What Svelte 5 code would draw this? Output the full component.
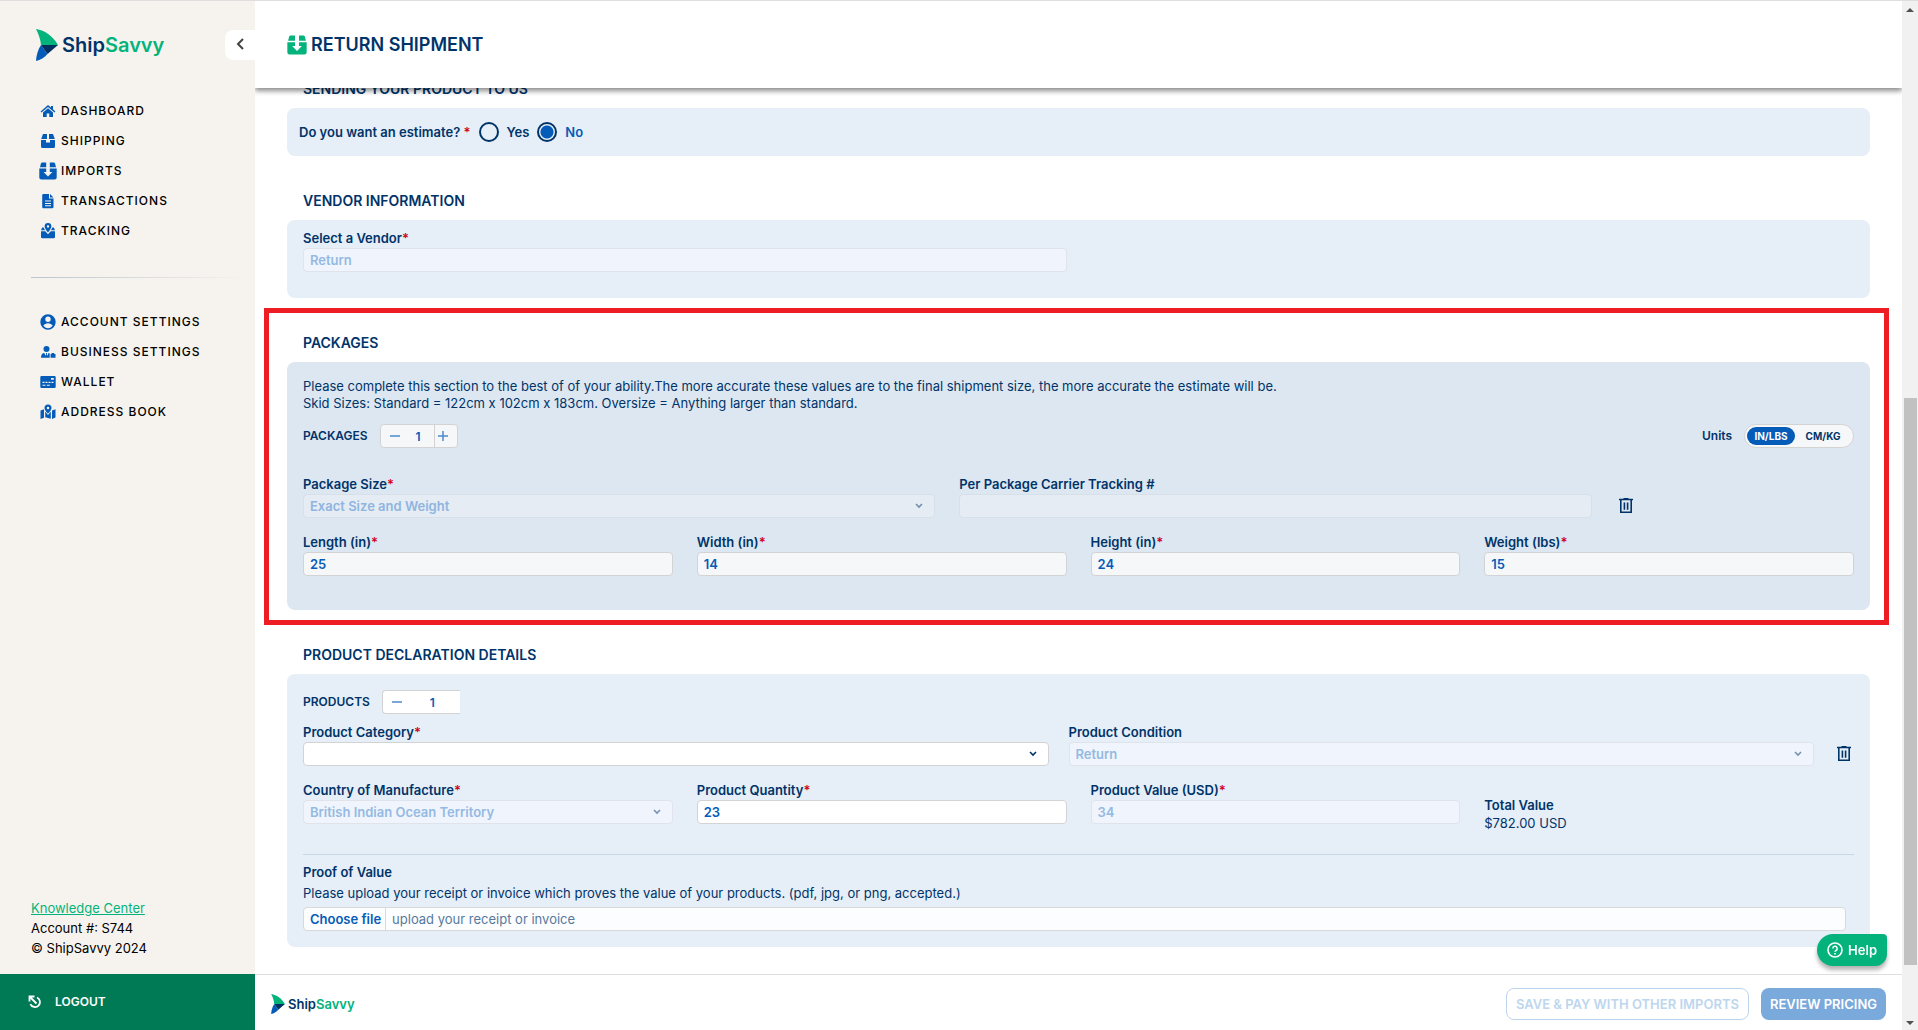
<script lang="ts">
	interface NavItem {
		label: string;
		icon: string;
	}

	const mainNav: NavItem[] = [
		{ label: 'Dashboard', icon: 'home' },
		{ label: 'Shipping', icon: 'box' },
		{ label: 'Imports', icon: 'import' },
		{ label: 'Transactions', icon: 'file' },
		{ label: 'Tracking', icon: 'tracking' }
	];

	const settingsNav: NavItem[] = [
		{ label: 'Account Settings', icon: 'account' },
		{ label: 'Business Settings', icon: 'business' },
		{ label: 'Wallet', icon: 'wallet' },
		{ label: 'Address Book', icon: 'map' }
	];

	let estimate = $state('no');
	let units = $state('in');
	let packageCount = $state(1);
	let productCount = $state(1);
	let quantity = $state(23);
	let value = $state(34);
	let total = $derived((quantity * value).toFixed(2));

	let dimensions = $state([
		{ id: 'length', label: 'Length', value: '25' },
		{ id: 'width', label: 'Width', value: '14' },
		{ id: 'height', label: 'Height', value: '24' },
		{ id: 'weight', label: 'Weight', value: '15' }
	]);

	function unitFor(id: string) {
		if (id === 'weight') return units === 'in' ? 'lbs' : 'kg';
		return units === 'in' ? 'in' : 'cm';
	}
</script>

{#snippet icon(name: string)}
	<svg class="icon" viewBox="0 0 18 18" fill="currentColor" aria-hidden="true">
		{#if name === 'home'}
			<path d="M9 3 1.6 9.4l.9 1L9 4.9l6.500 5.500.9-1-2.400-2.100V4h-2v1.600z" />
			<path d="M9 6.200 4 10.400V15h3.700v-3.600h2.600V15H14v-4.600z" />
		{:else if name === 'box'}
			<path d="M4 2h4v5H2.200zM10 2h4l1.800 5H10z" />
			<path d="M2 8h5v2.500h4V8h5v6.500a1.500 1.500 0 0 1-1.500 1.500h-11A1.500 1.500 0 0 1 2 14.500z" />
		{:else if name === 'import'}
			<path d="M3 .5h4.200v4.700H1L2 1.200zM10.800.5H15l1 .7 1 4h-6.200z" />
			<path
				fill-rule="evenodd"
				d="M.3 6.600h6.900V10H4.600L9 14.500l4.400-4.500h-2.600V6.600h6.900v8.900a2 2 0 0 1-2 2H2.300a2 2 0 0 1-2-2z"
			/>
		{:else if name === 'file'}
			<path
				fill-rule="evenodd"
				d="M4.500 2H10v4.500h4.500V15a1.300 1.300 0 0 1-1.300 1.300H4.500A1.300 1.300 0 0 1 3.200 15V3.300A1.300 1.300 0 0 1 4.500 2zM6 8.500v1h6v-1zm0 2.400v1h6v-1zm0 2.400v1h6v-1z"
			/>
			<path d="M11 2v3.500h3.500z" />
		{:else if name === 'tracking'}
			<path
				fill-rule="evenodd"
				d="M9 1a3.400 3.400 0 0 1 3.400 3.400C12.400 6.500 9 10.400 9 10.400S5.600 6.500 5.600 4.400A3.400 3.400 0 0 1 9 1zm0 2.200a1.200 1.200 0 1 0 0 2.400 1.200 1.200 0 0 0 0-2.400z"
			/>
			<path d="M3.200 5.500h1.400L6 8.200H2zM13.400 5.500h1.400L16 8.200h-4z" />
			<path d="M2 9.300h4.300L9 12.200l2.700-2.900H16V15a1.300 1.300 0 0 1-1.300 1.300H3.300A1.300 1.300 0 0 1 2 15z" />
		{:else if name === 'account'}
			<path
				fill-rule="evenodd"
				d="M9 1.300a7.700 7.700 0 1 1 0 15.400A7.700 7.700 0 0 1 9 1.300zm0 2.200a2.700 2.700 0 1 0 0 5.400 2.700 2.700 0 0 0 0-5.400zM4.300 12.600C5.300 14.200 7 15.200 9 15.200s3.700-1 4.700-2.600C12.700 11.100 11 10.200 9 10.200s-3.700.9-4.700 2.400z"
			/>
		{:else if name === 'business'}
			<path d="M7.500 3a3 3 0 1 1 0 6 3 3 0 0 1 0-6z" />
			<path d="M2 14.800c0-3 1.300-4.800 3.400-4.800l1 2.800.8-1.600L6.900 10h1.300l-.4 1.200.8 1.600.8-2.800 1.300.4v4.400z" />
			<path d="M11.600 11h1v-1h2.600v1h1.300v3.800h-4.900z" />
		{:else if name === 'wallet'}
			<path
				fill-rule="evenodd"
				d="M2.500 3h13a1.200 1.200 0 0 1 1.200 1.200v9.600a1.200 1.200 0 0 1-1.200 1.200h-13a1.200 1.200 0 0 1-1.200-1.200V4.200A1.200 1.200 0 0 1 2.500 3zM12 5v1.800h2.800V5zM3.500 8.800v1.200h2V8.800zm3 0v1.200h2V8.800zm3 0v1.200h2V8.800zm3 0v1.200h2V8.800zm-9 3v1h3v-1zm4.300 0v1h3v-1z"
			/>
		{:else if name === 'map'}
			<path d="M1.500 7.500 5 6.200v8.600l-3.500 1.300zM6.200 8.500 9 12l2.800-3.500v7.200l-5.600-1.500zM13 7.500l3.500-1.300v8.400L13 16z" />
			<path
				fill-rule="evenodd"
				d="M9 1.500a3.500 3.500 0 0 1 3.500 3.500C12.500 7.200 9 10.700 9 10.700S5.500 7.200 5.500 5A3.500 3.500 0 0 1 9 1.500zm0 2.200a1.300 1.300 0 1 0 0 2.600 1.300 1.300 0 0 0 0-2.600z"
			/>
		{/if}
	</svg>
{/snippet}

{#snippet logo()}
	<svg class="mark" viewBox="0 0 22 32" aria-hidden="true">
		<path fill="#04b37b" d="M0 0c9 1.500 17 7 22 16H5C4.500 10 2.500 5 0 0z" />
		<path fill="#055cb8" d="M5 16 11.500 25C8.500 28.500 4.500 31 0 32 .3 26 2 20.500 5 16z" />
		<path fill="#00305f" d="M5 16h17l-10.500 9z" />
	</svg>
	<span class="word">Ship<span>Savvy</span></span>
{/snippet}

{#snippet navList(items: NavItem[])}
	<ul>
		{#each items as item}
			<li><a href="#{item.icon}">{@render icon(item.icon)}{item.label}</a></li>
		{/each}
	</ul>
{/snippet}

{#snippet chevron()}
	<svg class="chevron" viewBox="0 0 8 6" aria-hidden="true">
		<path d="M1 1l3 3 3-3" fill="none" stroke="currentColor" stroke-width="1.600" />
	</svg>
{/snippet}

{#snippet sign(d: string)}
	<svg class="sign" viewBox="0 0 10 10" aria-hidden="true">
		<path {d} fill="none" stroke="currentColor" stroke-width="1.500" />
	</svg>
{/snippet}

{#snippet trash()}
	<button class="trash" aria-label="Remove">
		<svg viewBox="0 0 14 16" aria-hidden="true">
			<path
				d="M0 1.500h14M4.500.8h5M1.800 2v12.200h10.400V2M5.400 4.500v7.200M8.600 4.500v7.200"
				fill="none"
				stroke="currentColor"
				stroke-width="1.600"
			/>
		</svg>
	</button>
{/snippet}

<div class="app">
	<aside>
		<div class="brand">
			<a class="logo" href="#home">{@render logo()}</a>
			<button class="collapse" aria-label="Collapse menu">
				<svg viewBox="0 0 8 12" aria-hidden="true">
					<path d="M7 1 2 6l5 5" fill="none" stroke="currentColor" stroke-width="2" />
				</svg>
			</button>
		</div>

		<nav>
			{@render navList(mainNav)}
			<hr />
			{@render navList(settingsNav)}
		</nav>

		<div class="account">
			<a href="#knowledge">Knowledge Center</a>
			<p>Account #: S744</p>
			<p>© ShipSavvy 2024</p>
		</div>

		<button class="logout">
			<svg viewBox="0 0 14 14" aria-hidden="true">
				<path
					d="M1.500 6.500V1.500h5M2 2l6.500 6.500M9 2.500a5 5 0 1 1-6.600 6.600"
					fill="none"
					stroke="currentColor"
					stroke-width="1.800"
				/>
			</svg>
			LOGOUT
		</button>
	</aside>

	<main>
		<header>
			{@render icon('import')}
			<h1>RETURN SHIPMENT</h1>
		</header>

		<div class="content">
			<section class="first">
				<h2>SENDING YOUR PRODUCT TO US</h2>
				<div class="card estimate" role="radiogroup" aria-labelledby="estimate-label">
					<span class="label" id="estimate-label">Do you want an estimate? <i>*</i></span>
					<label><input type="radio" name="estimate" value="yes" bind:group={estimate} />Yes</label>
					<label><input type="radio" name="estimate" value="no" bind:group={estimate} />No</label>
				</div>
			</section>

			<section class="vendor">
				<h2>VENDOR INFORMATION</h2>
				<div class="card grid">
					<div class="field half">
						<label for="vendor">Select a Vendor<i>*</i></label>
						<input id="vendor" type="text" value="Return" disabled />
					</div>
				</div>
			</section>

			<section class="packages">
				<h2>PACKAGES</h2>
				<div class="card muted">
					<p>
						Please complete this section to the best of of your ability.The more accurate these values
						are to the final shipment size, the more accurate the estimate will be.<br />
						Skid Sizes: Standard = 122cm x 102cm x 183cm. Oversize = Anything larger than standard.
					</p>

					<div class="toolbar">
						<label for="package-count">PACKAGES</label>
						<div class="stepper">
							<button aria-label="Fewer packages" onclick={() => packageCount--}>
								{@render sign('M0 5h10')}
							</button>
							<input id="package-count" type="text" bind:value={packageCount} />
							<button class="plus" aria-label="More packages" onclick={() => packageCount++}>
								{@render sign('M0 5h10M5 0v10')}
							</button>
						</div>
						<span class="label units">Units</span>
						<div class="toggle">
							<button class:active={units === 'in'} onclick={() => (units = 'in')}>IN/LBS</button>
							<button class:active={units === 'cm'} onclick={() => (units = 'cm')}>CM/KG</button>
						</div>
					</div>

					<div class="grid">
						<div class="field five">
							<label for="package-size">Package Size<i>*</i></label>
							<div class="select">
								<select id="package-size" disabled><option>Exact Size and Weight</option></select>
								{@render chevron()}
							</div>
						</div>
						<div class="field five">
							<label for="carrier">Per Package Carrier Tracking #</label>
							<input id="carrier" type="text" disabled />
						</div>
						{@render trash()}
						{#each dimensions as dim}
							<div class="field quarter">
								<label for={dim.id}>{dim.label} ({unitFor(dim.id)})<i>*</i></label>
								<input id={dim.id} type="text" bind:value={dim.value} />
							</div>
						{/each}
					</div>
				</div>
			</section>

			<section class="products">
				<h2>PRODUCT DECLARATION DETAILS</h2>
				<div class="card">
					<div class="toolbar">
						<label for="product-count">PRODUCTS</label>
						<div class="stepper open">
							<button aria-label="Fewer products" onclick={() => productCount--}>
								{@render sign('M0 5h10')}
							</button>
							<input id="product-count" type="text" bind:value={productCount} />
						</div>
					</div>

					<div class="pair">
						<div class="field">
							<label for="category">Product Category<i>*</i></label>
							<div class="select">
								<select id="category"><option></option></select>
								{@render chevron()}
							</div>
						</div>
						<div class="field">
							<label for="condition">Product Condition</label>
							<div class="select">
								<select id="condition" disabled><option>Return</option></select>
								{@render chevron()}
							</div>
						</div>
						{@render trash()}
					</div>

					<div class="grid">
						<div class="field quarter">
							<label for="country">Country of Manufacture<i>*</i></label>
							<div class="select">
								<select id="country" disabled><option>British Indian Ocean Territory</option></select>
								{@render chevron()}
							</div>
						</div>
						<div class="field quarter">
							<label for="quantity">Product Quantity<i>*</i></label>
							<input id="quantity" type="text" bind:value={quantity} />
						</div>
						<div class="field quarter">
							<label for="value">Product Value (USD)<i>*</i></label>
							<input id="value" type="text" bind:value disabled />
						</div>
						<div class="total quarter">
							<span class="label">Total Value</span>
							<span>${total} USD</span>
						</div>
					</div>

					<div class="proof">
						<span class="label">Proof of Value</span>
						<p>Please upload your receipt or invoice which proves the value of your products. (pdf, jpg, or png, accepted.)</p>
						<label class="upload">
							<input type="file" />
							<span class="choose">Choose file</span>
							<span class="hint">upload your receipt or invoice</span>
						</label>
					</div>
				</div>
			</section>
		</div>

		<footer>
			<a class="logo small" href="#home">{@render logo()}</a>
			<button class="save">SAVE &amp; PAY WITH OTHER IMPORTS</button>
			<button class="review">REVIEW PRICING</button>
		</footer>

		<button class="help">
			<svg viewBox="0 0 16 16" fill="none" stroke="currentColor" aria-hidden="true">
				<circle cx="8" cy="8" r="7" stroke-width="1.600" />
				<path d="M5.800 6.500a2.200 2.200 0 1 1 3.200 2c-.7.400-1 .7-1 1.300" stroke-width="1.500" />
				<path d="M8 11v1.600" stroke-width="1.700" />
			</svg>
			Help
		</button>
	</main>

	<div class="scrollbar" aria-hidden="true">
		<svg viewBox="0 0 8 4"><path d="M0 4l4-4 4 4z" /></svg>
		<div class="track"><div class="thumb"></div></div>
		<svg viewBox="0 0 8 4"><path d="M0 0l4 4 4-4z" /></svg>
	</div>
</div>

<style>
	:global(body) {
		overflow: hidden;
	}

	.app {
		--navy: #003469;
		--blue: #055cb8;
		--green: #04b37b;
		--line: #d3d3d3;
		height: 100vh;
		box-sizing: border-box;
		border-top: 1px solid #dedede;
		display: grid;
		grid-template-columns: 255px 1fr 16px;
		font: 13px/16px Inter, 'Liberation Sans', sans-serif;
		color: var(--navy);
	}

	.app :global(*) {
		box-sizing: border-box;
	}

	button,
	input,
	select {
		font: inherit;
		color: inherit;
		margin: 0;
	}

	button {
		border: 0;
		padding: 0;
		background: none;
		cursor: pointer;
	}

	p,
	h1,
	h2,
	ul {
		margin: 0;
		padding: 0;
	}

	/* sidebar */
	aside {
		display: flex;
		flex-direction: column;
		background: #f6f3ee;
		color: #000;
	}

	.brand {
		display: flex;
		justify-content: space-between;
		align-items: center;
		padding: 28px 0 0 36px;
	}

	.logo {
		display: flex;
		align-items: center;
		gap: 4px;
		font-size: 20px;
		font-weight: 600;
		line-height: 32px;
		color: var(--navy);
		text-decoration: none;
	}

	.word span {
		color: var(--green);
	}

	.mark {
		width: 22px;
		height: 32px;
	}

	.logo.small {
		gap: 3px;
		margin-right: auto;
		font-size: 13px;
		line-height: 20px;
	}

	.small .mark {
		width: 14px;
		height: 20px;
	}

	.collapse {
		width: 30px;
		height: 30px;
		border-radius: 8px 0 0 8px;
		background: #fff;
		color: #444;
	}

	.collapse svg {
		width: 8px;
		height: 12px;
	}

	nav {
		flex: 1;
		padding-top: 35px;
	}

	ul {
		list-style: none;
	}

	li a {
		display: flex;
		align-items: center;
		gap: 4px;
		height: 30px;
		padding-left: 39px;
		color: #000;
		font-size: 12px;
		font-weight: 500;
		letter-spacing: 1px;
		text-transform: uppercase;
		text-decoration: none;
	}

	.icon {
		width: 18px;
		height: 18px;
		color: var(--blue);
	}

	hr {
		height: 1px;
		margin: 31px 6px 29px 31px;
		border: 0;
		background: linear-gradient(to right, #bcc5cc, #f6f3ee);
	}

	.account {
		display: flex;
		flex-direction: column;
		gap: 4px;
		padding: 0 31px 18px;
	}

	.account a {
		color: var(--green);
	}

	.logout {
		display: flex;
		align-items: center;
		gap: 13px;
		height: 56px;
		padding-left: 28px;
		background: #007a55;
		color: #fff;
		font-size: 12px;
		font-weight: 600;
	}

	.logout svg {
		width: 14px;
		height: 14px;
	}

	/* page */
	main {
		display: flex;
		flex-direction: column;
		min-width: 0;
		min-height: 0;
		background: #fff;
	}

	header {
		position: relative;
		z-index: 1;
		display: flex;
		align-items: center;
		gap: 4px;
		height: 87px;
		padding: 0 32px;
		background: #fff;
		box-shadow: 0 3px 5px rgba(0, 0, 0, 0.45);
		clip-path: inset(0 0 -12px 0);
	}

	header .icon {
		width: 20px;
		height: 20px;
		color: var(--green);
	}

	h1 {
		font-size: 18px;
		font-weight: 600;
		line-height: 24px;
	}

	.content {
		flex: 1;
		min-height: 0;
		overflow: hidden;
		padding: 0 32px;
	}

	h2 {
		padding: 0 16px;
		margin-bottom: 9px;
		font-size: 14px;
		font-weight: 600;
		line-height: 20px;
	}

	.first {
		margin-top: -9px;
	}

	.vendor {
		padding-top: 35px;
	}

	.packages {
		margin: 10px -19px 0 -23px;
		padding: 20px 14px 10px 18px;
		border: 5px solid #ee1c23;
	}

	.products {
		padding-top: 20px;
	}

	.card {
		padding: 16px;
		border-radius: 8px;
		background: #e6eef7;
	}

	.vendor .card {
		padding: 10px 16px 26px;
	}

	.card.muted {
		padding-bottom: 34px;
		background: #dde7f1;
	}

	.muted p {
		line-height: 17px;
	}

	label,
	.label {
		font-weight: 600;
	}

	i {
		color: #d0021b;
		font-style: normal;
	}

	.estimate {
		display: flex;
		align-items: center;
		gap: 8px;
		padding: 14px 12px;
	}

	.estimate label {
		display: flex;
		align-items: center;
		gap: 8px;
	}

	.estimate label:has(:checked) {
		color: var(--blue);
	}

	input[type='radio'] {
		appearance: none;
		width: 20px;
		height: 20px;
		border: 2px solid var(--navy);
		border-radius: 50%;
	}

	input[type='radio']:checked {
		background: radial-gradient(circle, var(--blue) 6px, transparent 7px);
	}

	.grid {
		display: grid;
		grid-template-columns: repeat(12, minmax(0, 1fr));
		gap: 16px 24px;
	}

	.half {
		grid-column: span 6;
	}

	.five {
		grid-column: span 5;
	}

	.quarter {
		grid-column: span 3;
	}

	.field {
		display: flex;
		flex-direction: column;
		gap: 2px;
		min-width: 0;
	}

	input[type='text'],
	select {
		width: 100%;
		height: 24px;
		padding: 0 6px;
		border: 1px solid var(--line);
		border-radius: 4px;
		background: #fff;
		color: var(--blue);
		font-weight: 600;
	}

	select {
		appearance: none;
		grid-area: 1 / 1;
	}

	input[type='text']:disabled,
	select:disabled {
		border-color: #e0e4ea;
		background: #f0f4fc;
		color: #94bae3;
		opacity: 1;
	}

	.muted input[type='text'] {
		background: #f5f7f9;
	}

	.muted input[type='text']:disabled,
	.muted select:disabled {
		border-color: #d7dfe9;
		background: #e5ecf4;
		color: #8fb5df;
	}

	.select {
		display: grid;
		align-items: center;
	}

	.chevron {
		grid-area: 1 / 1;
		justify-self: end;
		width: 8px;
		height: 6px;
		margin-right: 12px;
		pointer-events: none;
	}

	select:disabled + .chevron {
		opacity: 0.5;
	}

	.toolbar {
		display: flex;
		align-items: center;
		gap: 12px;
		font-size: 12px;
	}

	.muted .toolbar {
		margin: 12px 0 28px;
	}

	.products .toolbar {
		margin-bottom: 10px;
	}

	.stepper {
		display: flex;
		width: 78px;
		height: 24px;
		border: 1px solid var(--line);
		border-radius: 4px;
		overflow: hidden;
		background: #fff;
		color: var(--blue);
	}

	.muted .stepper,
	.muted .toggle {
		background: #f5f7f9;
	}

	.stepper.open {
		border-right: 0;
		border-radius: 4px 0 0 4px;
	}

	.stepper button {
		display: flex;
		align-items: center;
		justify-content: center;
		width: 28px;
	}

	.stepper .plus {
		width: 23px;
		padding-right: 6px;
		border-left: 1px solid var(--line);
	}

	.sign {
		width: 10px;
		height: 10px;
		opacity: 0.7;
	}

	.stepper input[type='text'] {
		flex: 1;
		min-width: 0;
		height: 22px;
		padding: 0 6px 0 0;
		border: 0;
		border-radius: 0;
		background: none;
		text-align: center;
	}

	.units {
		margin-left: auto;
	}

	.toggle {
		display: flex;
		width: 110px;
		height: 24px;
		padding: 2px;
		border: 1px solid var(--line);
		border-radius: 12px;
	}

	.toggle button {
		flex: 1;
		border-radius: 9px;
		font-size: 10px;
		font-weight: 700;
	}

	.toggle .active {
		flex: 0 0 48px;
		background: var(--blue);
		color: #fff;
	}

	.trash {
		align-self: end;
		justify-self: start;
		height: 24px;
		margin-left: 3px;
		color: var(--navy);
	}

	.trash svg {
		display: block;
		width: 14px;
		height: 16px;
	}

	.pair {
		display: grid;
		grid-template-columns: 1fr 1fr 20px;
		gap: 20px;
		margin-bottom: 16px;
	}

	.total {
		display: flex;
		flex-direction: column;
		gap: 2px;
		padding-top: 15px;
	}

	.proof {
		display: flex;
		flex-direction: column;
		margin-top: 23px;
		padding-top: 9px;
		border-top: 1px solid #c9d6e6;
	}

	.proof p {
		margin: 5px 0 6px;
	}

	.upload {
		display: flex;
		align-items: stretch;
		height: 24px;
		margin-right: 8px;
		border: 1px solid #d9d9d9;
		border-radius: 4px;
		background: #fcfdfe;
		line-height: 22px;
		overflow: hidden;
	}

	.upload input {
		position: absolute;
		width: 1px;
		height: 1px;
		opacity: 0;
	}

	.choose {
		padding: 0 4px 0 6px;
		border-right: 1px solid #d9d9d9;
		color: var(--blue);
	}

	.hint {
		padding-left: 6px;
		color: #58799d;
		font-weight: 400;
	}

	footer {
		display: flex;
		align-items: center;
		gap: 12px;
		height: 56px;
		padding: 2px 16px 0;
		border-top: 1px solid #dedede;
	}

	.save,
	.review {
		height: 32px;
		padding: 0 9px;
		border-radius: 8px;
		font-weight: 600;
	}

	.save {
		border: 1px solid #bdd6ee;
		color: #bdd6ee;
	}

	.review {
		background: #7aa9db;
		color: #fff;
	}

	.help {
		position: fixed;
		right: 31px;
		bottom: 64px;
		display: flex;
		align-items: center;
		gap: 5px;
		height: 32px;
		padding: 0 10px;
		border-radius: 16px 4px 12px 16px;
		background: var(--green);
		color: #fff;
		font-weight: 600;
		box-shadow: 0 4px 4px rgba(0, 0, 0, 0.3);
	}

	.help svg {
		width: 16px;
		height: 16px;
	}

	/* scrollbar */
	.scrollbar {
		display: flex;
		flex-direction: column;
		align-items: center;
		gap: 5px;
		padding: 7px 0 5px;
		background: #f1f1f1;
	}

	.scrollbar svg {
		width: 8px;
		height: 4px;
		fill: #505050;
	}

	.track {
		display: flex;
		flex-direction: column;
		flex: 1;
		width: 13px;
		padding: 37vh 0 5vh;
	}

	.thumb {
		flex: 1;
		background: #c1c1c1;
	}
</style>
